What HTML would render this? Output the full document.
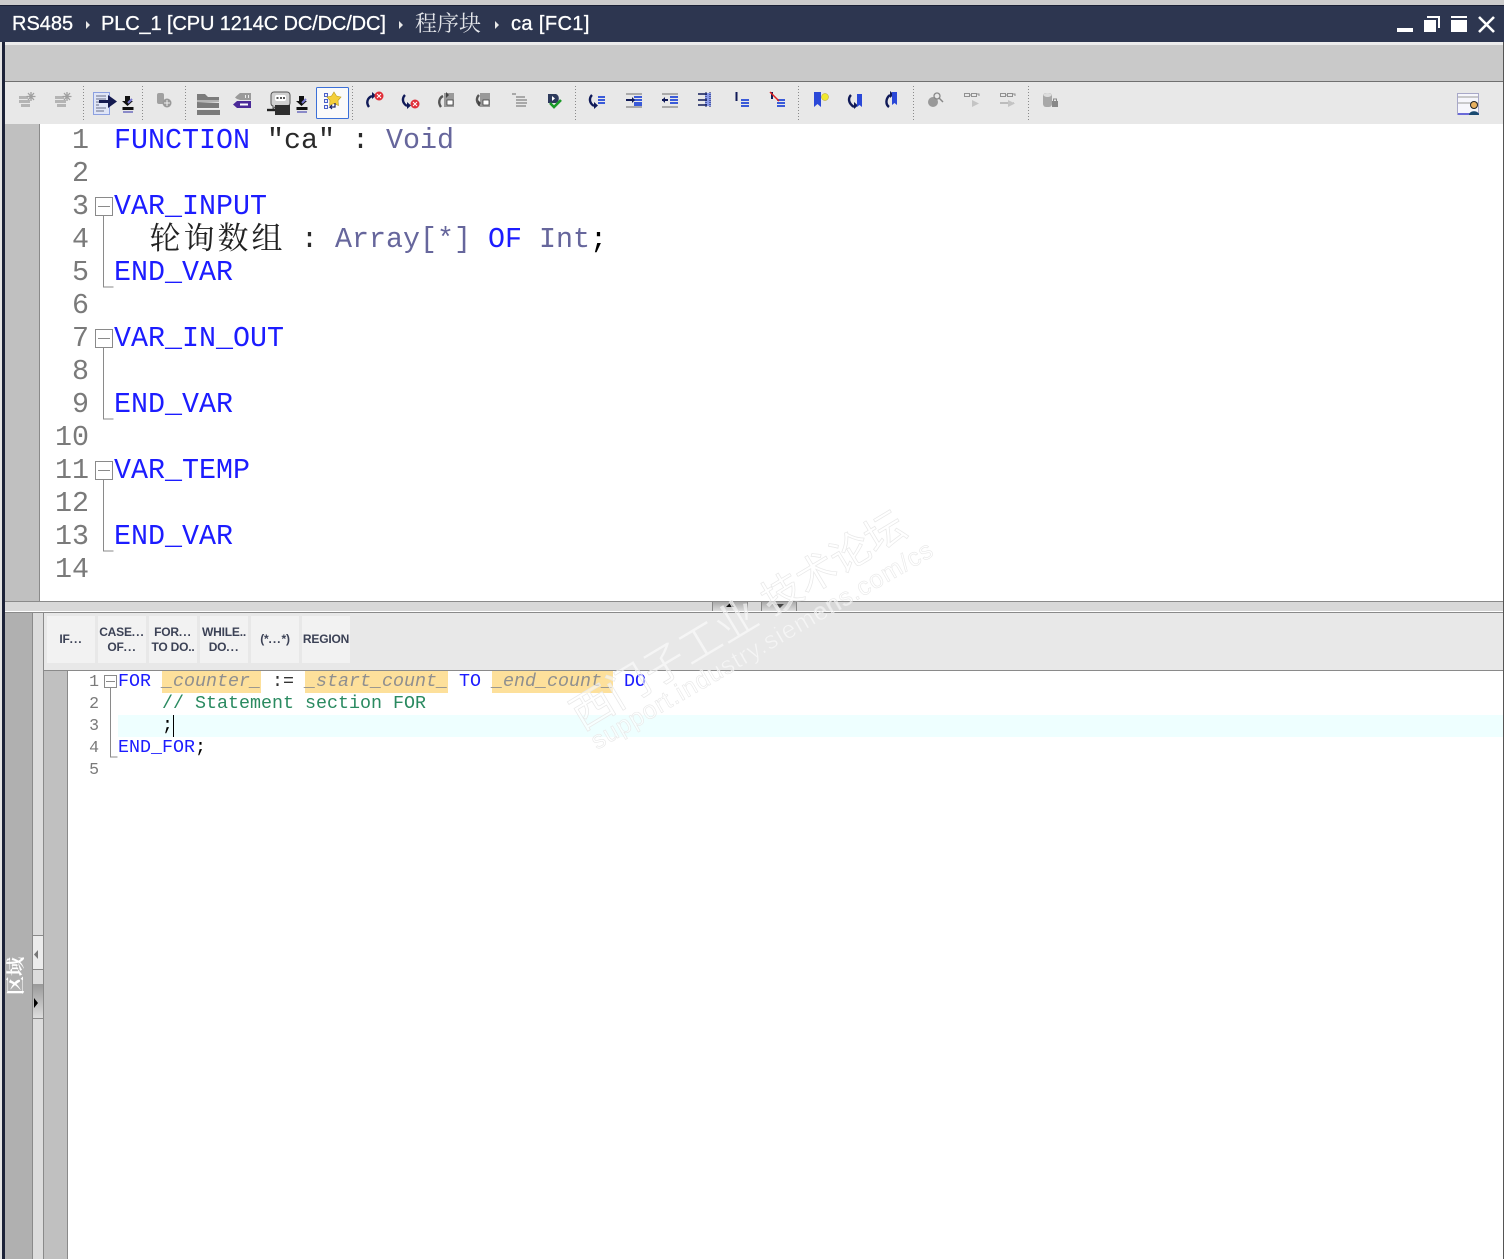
<!DOCTYPE html>
<html><head><meta charset="utf-8"><style>
html,body{margin:0;padding:0;background:#fff}
#p{position:relative;width:1504px;height:1259px;overflow:hidden;background:#fff}
#p div,#p span.a{position:absolute}
.up,.lo{font-family:"Liberation Mono","Noto Serif CJK SC",monospace;white-space:pre}
.up{font-size:28.33px;line-height:33px;height:33px;left:114px}
.lo{font-size:18.33px;line-height:22px;height:22px;left:118px}
.n{font-family:"Liberation Mono",monospace;color:#7a7a7a;text-align:right;white-space:pre}
.k{color:#1c1cff}.t{color:#66669c}.d{color:#2a2a2a}.g{color:#2a8a60}
.v{color:#8f8f8f;font-style:italic}
.c{display:block;top:218px;width:34px;font-family:"Noto Serif CJK SC",serif;font-size:31px;color:#222;text-align:center;line-height:36px}
.tt{color:#fff;font-family:"Liberation Sans","Noto Sans CJK SC",sans-serif;font-size:20px;line-height:26px;top:11px;white-space:pre;-webkit-text-stroke:.3px #fff}
.b{background:#f2f2f2;top:616px;width:48px;height:47px;font:bold 12px/15px "Liberation Sans",sans-serif;color:#3c4256;text-align:center;letter-spacing:-.2px;display:flex;align-items:center;justify-content:center;white-space:pre}
.b i{font-style:normal;letter-spacing:1px}
.hl{background:#fde09b;height:22px;top:671px}
</style></head><body><div id="p">
<div style="left:0;top:0;width:1504px;height:5px;background:#cbcbcb"></div>
<div style="left:0;top:5px;width:1504px;height:37px;background:#2d3650;border-top:1px solid #1a2035;box-sizing:border-box"></div>
<div style="left:0;top:42px;width:1504px;height:3px;background:#ececec"></div>
<div style="left:0;top:45px;width:1504px;height:36px;background:#c9c9c9"></div>
<div style="left:0;top:81px;width:1504px;height:1px;background:#707070"></div>
<div style="left:0;top:82px;width:1504px;height:42px;background:#e8e8e8"></div>
<div style="left:0;top:42px;width:2px;height:1217px;background:#e4e4e4"></div>
<div style="left:2px;top:42px;width:3px;height:1217px;background:#1c2238"></div>
<div style="left:1503px;top:42px;width:1px;height:1217px;background:#555"></div>

<div class="tt" style="left:12px">RS485</div>
<div class="tt" style="left:101px;letter-spacing:-.12px">PLC_1 [CPU 1214C DC/DC/DC]</div>
<div class="tt" style="left:415px;font-family:'Noto Serif CJK SC',serif;font-size:22px;color:#e4e6ea;top:10px;-webkit-text-stroke:0">程序块</div>
<div class="tt" style="left:511px;letter-spacing:.4px">ca [FC1]</div>

<!-- upper gutter -->
<div style="left:5px;top:124px;width:34px;height:477px;background:#c0c0c0"></div>
<div style="left:39px;top:124px;width:1px;height:477px;background:#8a8a8a"></div>
<div class="n" style="left:50px;width:39px;top:124px;font-size:28.33px;line-height:33px">1
2
3
4
5
6
7
8
9
10
11
12
13
14</div>

<div class="up" style="top:124px"><span class="k">FUNCTION</span> <span class="d">"ca"</span> <span class="d">:</span> <span class="t">Void</span></div>
<div class="up k" style="top:190px">VAR_INPUT</div>
<div class="c" style="left:148px">轮</div><div class="c" style="left:182px">询</div><div class="c" style="left:216px">数</div><div class="c" style="left:250px">组</div>
<div class="up" style="top:223px">           <span class="d">:</span> <span class="t">Array[*]</span> <span class="k">OF</span> <span class="t">Int</span><span style="color:#000">;</span></div>
<div class="up k" style="top:256px">END_VAR</div>
<div class="up k" style="top:322px">VAR_IN_OUT</div>
<div class="up k" style="top:388px">END_VAR</div>
<div class="up k" style="top:454px">VAR_TEMP</div>
<div class="up k" style="top:520px">END_VAR</div>

<!-- splitter -->
<div style="left:5px;top:601px;width:1498px;height:11px;background:#d8d8d8;border-top:1px solid #8a8a8a;box-sizing:border-box"></div>
<div style="left:5px;top:611px;width:1498px;height:1px;background:#fff"></div>
<div style="left:5px;top:612px;width:1498px;height:1px;background:#8a8a8a"></div>
<div style="left:712px;top:602px;width:34px;height:9px;background:linear-gradient(#aaa,#ddd);border:solid #888;border-width:0 1px"></div>
<div style="left:761px;top:602px;width:34px;height:9px;background:linear-gradient(#aaa,#ddd);border:solid #888;border-width:0 1px"></div>

<!-- lower panel -->
<div style="left:5px;top:613px;width:27px;height:646px;background:#b0b0b0"></div>
<div style="left:32px;top:613px;width:1px;height:646px;background:#8a8a8a"></div>
<div style="left:33px;top:613px;width:10px;height:646px;background:#dcdcdc"></div>
<div style="left:43px;top:613px;width:1px;height:646px;background:#8a8a8a"></div>
<div style="left:44px;top:613px;width:1459px;height:57px;background:#e8e8e8"></div>
<div style="left:44px;top:670px;width:1459px;height:1px;background:#8a8a8a"></div>
<div style="left:44px;top:671px;width:23px;height:588px;background:#c0c0c0"></div>
<div style="left:67px;top:671px;width:1px;height:588px;background:#8a8a8a"></div>
<div style="left:33px;top:935px;width:10px;height:1px;background:#8a8a8a"></div>
<div style="left:33px;top:936px;width:10px;height:33px;background:#ececec"></div>
<div style="left:33px;top:969px;width:10px;height:1px;background:#8a8a8a"></div>
<div style="left:33px;top:984px;width:10px;height:34px;background:linear-gradient(#999,#ddd)"></div>
<div style="left:33px;top:1018px;width:10px;height:1px;background:#8a8a8a"></div>
<div style="left:-5px;top:965px;width:40px;height:22px;transform:rotate(-90deg);color:#fff;font:bold 19px/22px 'Noto Serif CJK SC',serif;text-align:center;white-space:pre">区域</div>

<div class="b" style="left:47px"><span>IF<i>...</i></span></div>
<div class="b" style="left:98px"><span>CASE<i>...</i>
OF<i>...</i></span></div>
<div class="b" style="left:149px"><span>FOR<i>...</i>
TO DO..</span></div>
<div class="b" style="left:200px"><span>WHILE..
DO<i>...</i></span></div>
<div class="b" style="left:251px"><span>(*<i>...</i>*)</span></div>
<div class="b" style="left:302px"><span>REGION</span></div>

<div style="left:118px;top:715px;width:1385px;height:22px;background:#eeffff"></div>
<div class="hl" style="left:162px;width:99px"></div>
<div class="hl" style="left:305px;width:143px"></div>
<div class="hl" style="left:492px;width:121px"></div>
<div style="left:173px;top:715px;width:1px;height:22px;background:#000"></div>

<div class="n" style="left:68px;width:31px;top:671px;font-size:16.5px;line-height:22px">1
2
3
4
5</div>
<div class="lo" style="top:671px"><span class="k">FOR</span> <span class="v">_counter_</span> <span style="color:#333">:=</span> <span class="v">_start_count_</span> <span class="k">TO</span> <span class="v">_end_count_</span> <span class="k">DO</span></div>
<div class="lo g" style="top:693px">    // Statement section FOR</div>
<div class="lo" style="top:715px;color:#000">    ;</div>
<div class="lo" style="top:737px"><span class="k">END_FOR</span><span style="color:#000">;</span></div>

<svg style="position:absolute;left:0;top:0" width="1504" height="1259" viewBox="0 0 1504 1259">
<!-- window controls -->
<g fill="#fff">
<rect x="1397" y="28" width="16" height="4"/>
<rect x="1424" y="20" width="12" height="12"/><path d="M1427 16h13v12h-2v-10h-11z"/>
<rect x="1451" y="16" width="16" height="2"/><rect x="1451" y="20" width="16" height="12"/>
</g>
<path d="M1479 17l15 15M1494 17l-15 15" stroke="#fff" stroke-width="2.6"/>
<!-- breadcrumbs -->
<g fill="#e8e8e8"><path d="M86 21l4 4-4 4z"/><path d="M399 21l4 4-4 4z"/><path d="M495 21l4 4-4 4z"/></g>
<!-- separators -->
<g stroke="#8a8a8a" stroke-dasharray="1 2"><path d="M83.500 86v36M142.500 86v36M185.500 86v36M352.500 86v36M575.500 86v36M798.500 86v36M913.500 86v36M1028.500 86v36"/></g>
<!-- fold -->
<g fill="#fff" stroke="#8a8a8a">
<path fill="none" d="M103.500 215v72h10M103.500 347v72h10M103.500 479v72h10M110.500 687v70h7"/>
<rect x="95.500" y="197.500" width="17" height="18"/><path d="M98 206.500h12"/>
<rect x="95.500" y="329.500" width="17" height="18"/><path d="M98 338.500h12"/>
<rect x="95.500" y="461.500" width="17" height="18"/><path d="M98 470.500h12"/>
<rect x="104.500" y="675.500" width="12" height="12"/><path d="M106 681.500h9"/>
</g>
<!-- splitter arrows, scroll arrows -->
<path d="M726 607l4-4 4 4z" fill="#111"/><path d="M775 604h9l-4 4z" fill="#444"/>
<path d="M38 950v9l-4-4.500z" fill="#777"/><path d="M34 998v10l4-5z" fill="#000"/>
<!-- toolbar -->
<g id="ic">
<g fill="#b4b4b4"><path d="M19 96h9v3H19zM19 100h11v3H19zM21 104h9v3h-9zM55 96h9v3H55zM55 100h11v3H55zM57 104h9v3h-9z"/></g>
<g stroke="#a0a0a0" stroke-width="1.300"><path d="M31 92v9M26.500 96.500h9M28 93l6 7M34 93l-6 7M67 92v9M62.500 96.500h9M64 93l6 7M70 93l-6 7"/></g>
<rect x="93.500" y="92.500" width="16" height="22" fill="#dfe5f7" stroke="#8ca0e0"/>
<path d="M96 96h10M96 99h10M96 102h3M96 105h3M96 108h10M96 111h8" stroke="#6a7088"/>
<path d="M99 100h9v-5l9 6.500-9 6.500v-5h-9z" fill="#141a50"/>
<path d="M125 96h5v5h3l-5.500 5-5.500-5h3z" fill="#111"/><rect x="122.500" y="107" width="11" height="3" fill="#111"/><rect x="123" y="111" width="10" height="2" fill="#8a8ac8"/><path d="M128 103l4-4" stroke="#7a7ad0" stroke-width="2"/>
<rect x="157" y="93" width="7" height="11" rx="2" fill="#a0a0a0"/><circle cx="167" cy="103" r="4.500" fill="#999"/><path d="M167 100v6M164 103h6" stroke="#eee"/>
<g fill="#7b7b7b"><path d="M197 94h8l3 3h11v5h-22zM197 102l22 1v5h-22zM197 110h23v5h-23z" /></g>
<g stroke="#eee"><path d="M197 101h23M197 108.500h23"/></g>
<path d="M240 93h11v7h-11l-3-1-2-1.500 2-2z" fill="#9a9a9a"/><path d="M237 101h14v7h-14l-4-3.500z" fill="#4b2a98"/><path d="M240 104.500h8" stroke="#fff" stroke-width="2"/>
<path d="M245 95h1v3h-1zM248 95h1v3h-1z" fill="#eee"/>
<path d="M274 92h13a3 3 0 0 1 3 3v8a3 3 0 0 1-3 3h-11l-3 3v-3a3 3 0 0 1-2-3v-8a3 3 0 0 1 3-3z" fill="#d0d0d0" stroke="#555"/>
<rect x="275" y="95" width="11" height="6" rx="2" fill="#fff"/><path d="M276.500 98h2M280 98h2M283 98h2" stroke="#222" stroke-width="1.500"/>
<path d="M275 105h15v10h-15z" fill="#2e2e2e"/>
<path d="M267 110h8" stroke="#222" stroke-width="2.400"/>
<path d="M299 96h5v5h3l-5.500 5-5.500-5h3z" fill="#111"/><rect x="296.500" y="107" width="11" height="3" fill="#111"/><rect x="297" y="111" width="10" height="2" fill="#8a8ac8"/><path d="M302 103l4-4" stroke="#7a7ad0" stroke-width="2"/>
<rect x="316.500" y="87.500" width="32" height="31" fill="#fafafa" stroke="#3a6fd8" rx="1"/>
<g fill="#eef" stroke="#4a60c8"><rect x="324.500" y="93.500" width="3" height="3"/><rect x="324.500" y="99.500" width="3" height="3"/><rect x="324.500" y="105.500" width="3" height="3"/></g>
<path d="M334 92l2.500 4 4.500 1-3 3.500.5 5-4.500-2-4.500 2 .5-5-3-3.500 4.500-1z" fill="#f4cf3a" stroke="#b89a20" stroke-width=".6"/>
<path d="M335 103v4h-5l2-2M330 107l2 2" fill="none" stroke="#16206a" stroke-width="1.200"/>
<g fill="none" stroke="#101a58" stroke-width="2.400">
<path d="M369 107c-3-4-2-9 3-11"/><path d="M405 95c-3 3-3 8 2 11"/><path d="M441 107c-3-4-2-9 2-11" stroke="#555"/><path d="M479 95c-3 3-3 8 2 11" stroke="#555"/>
<path d="M592 95c-3 3-3 8 2 11"/><path d="M851 95c-3 3-3 8 3 12"/><path d="M889 107c-4-3-3-9 1-12"/>
</g>
<g fill="#101a58"><path d="M372 92v7l4-3.500z"/><path d="M407 102v7l4-3.500zM594 102v7l4-3.500zM854 102v7l4-3.500zM890 91v7l4-3.500z"/></g>
<circle cx="379" cy="96" r="4.500" fill="#e0303a"/><path d="M377 94l4 4M381 94l-4 4" stroke="#fff"/>
<circle cx="415" cy="104" r="4.500" fill="#e0303a"/><path d="M413 102l4 4M417 102l-4 4" stroke="#fff"/>
<path d="M444 93h10v14h-10z" fill="#999"/><rect x="447" y="100" width="6" height="5" fill="#fff" stroke="#333" stroke-width=".7"/>
<path d="M480 93h10v14h-10z" fill="#999"/><rect x="483" y="100" width="6" height="5" fill="#fff" stroke="#333" stroke-width=".7"/>
<path d="M478 100v6l3-3z" fill="#444"/><path d="M446 92v6l3-3z" fill="#444"/>
<g stroke="#a8a8a8" stroke-width="2"><path d="M512 94h4M516 97h9M516 100h11M516 103h11M516 106h10"/></g>
<path d="M548 94h8a5 5 0 0 1 0 9h-8z" fill="#2d3a5c"/><path d="M552 96l3 2.500-3 2.500z" fill="#fff"/>
<path d="M550 103l4 4 7-7" stroke="#1a9a28" stroke-width="2.600" fill="none"/>
<g stroke="#3a5ad8" stroke-width="2"><path d="M598 97h7M598 100h7M598 103h7"/></g>
<g stroke="#aaa" stroke-width="2"><path d="M626 94h16M626 107h16M662 94h16M662 107h16"/></g>
<g stroke="#3a5ad8" stroke-width="2"><path d="M634 97h8M634 100h8M634 103h8M634 105h8M670 97h8M670 100h8M670 103h8"/></g>
<path d="M626 100h6M662 100h6" stroke="#101a58" stroke-width="2"/><path d="M632 97l3 3-3 3zM665 97l-3 3 3 3z" fill="#101a58"/>
<g stroke="#8a9ae8" stroke-width="6"><path d="M708 93v13"/></g>
<g stroke="#101a58" stroke-width="1.500"><path d="M698 94h9M698 100h9M698 105h9"/></g>
<path d="M706 92v15M710 92v15" stroke="#101a58" stroke-dasharray="1 1"/>
<path d="M736.500 92v9" stroke="#101a58" stroke-width="2"/>
<g stroke="#3a5ad8" stroke-width="2"><path d="M741 100h8M741 103h8M741 106h8M777 100h8M777 103h8M777 106h8"/></g>
<path d="M772 92v7" stroke="#101a58" stroke-width="2"/><path d="M770 92l9 9" stroke="#e02020" stroke-width="1.500"/>
<path d="M814 92h7v15l-3.500-3-3.500 3z" fill="#2a48d8"/><circle cx="825" cy="97" r="3.500" fill="#f0e830" stroke="#b8a020" stroke-width=".5"/>
<path d="M857 94h5v13l-2.500-2-2.500 2z" fill="#2a48d8"/><path d="M889 92h5v13l-2.500-2-2.500 2z" transform="translate(3 0)" fill="#2a48d8"/>
<path d="M928 102a5 5 0 1 0 10 0a5 5 0 1 0-10 0z" fill="#999"/><circle cx="937" cy="96" r="3" fill="#e8e8e8" stroke="#888" stroke-width="1.300"/><path d="M939 98l4 4" stroke="#888" stroke-width="1.500"/>
<g fill="none" stroke="#909090"><rect x="964.500" y="93.500" width="5" height="3"/><rect x="971.500" y="93.500" width="5" height="3"/><path d="M976 94h3v2M969.500 95h2"/><rect x="1000.500" y="93.500" width="5" height="3"/><rect x="1007.500" y="93.500" width="5" height="3"/><path d="M1012 94h3v2M1005.500 95h2M1000 103h14"/></g>
<path d="M972 100l7 3.500-7 3.500zM1008 100l7 3.500-7 3.500z" fill="#c4c4c4"/>
<rect x="1043" y="93" width="9" height="14" rx="3" fill="#a8a8a8"/><ellipse cx="1047.500" cy="95" rx="4" ry="2" fill="#ddd"/><rect x="1052" y="101" width="6" height="6" fill="#888"/><path d="M1053.500 101v-2h3v2" fill="none" stroke="#888"/>
<rect x="1457.500" y="93.500" width="21" height="21" fill="#f6f6fc" stroke="#a8a8c8"/><path d="M1458 97h20M1458 103h20" stroke="#999"/><path d="M1458 114h21" stroke="#6a6ad8" stroke-width="2"/>
<circle cx="1474" cy="105" r="3.500" fill="#e8b060" stroke="#222"/><path d="M1469 115c0-5 10-5 10 0z" fill="#1a4a70"/>
</g>
<!-- watermark -->
<g fill="#fff" fill-opacity=".55" stroke="#e8e8e8" stroke-width=".7" font-family="'Noto Sans CJK SC',sans-serif">
<text x="582" y="731" font-size="42" transform="rotate(-31 582 731)">西门子工业</text>
<text x="772" y="616" font-size="40" transform="rotate(-31 772 616)">技术论坛</text>
</g>
<text x="597" y="750" font-family="'Liberation Sans',sans-serif" font-size="25" fill="#fff" fill-opacity=".55" stroke="#e8e8e8" stroke-width=".6" transform="rotate(-30 597 750)" textLength="390">support.industry.siemens.com/cs</text>
</svg>
</div></body></html>
